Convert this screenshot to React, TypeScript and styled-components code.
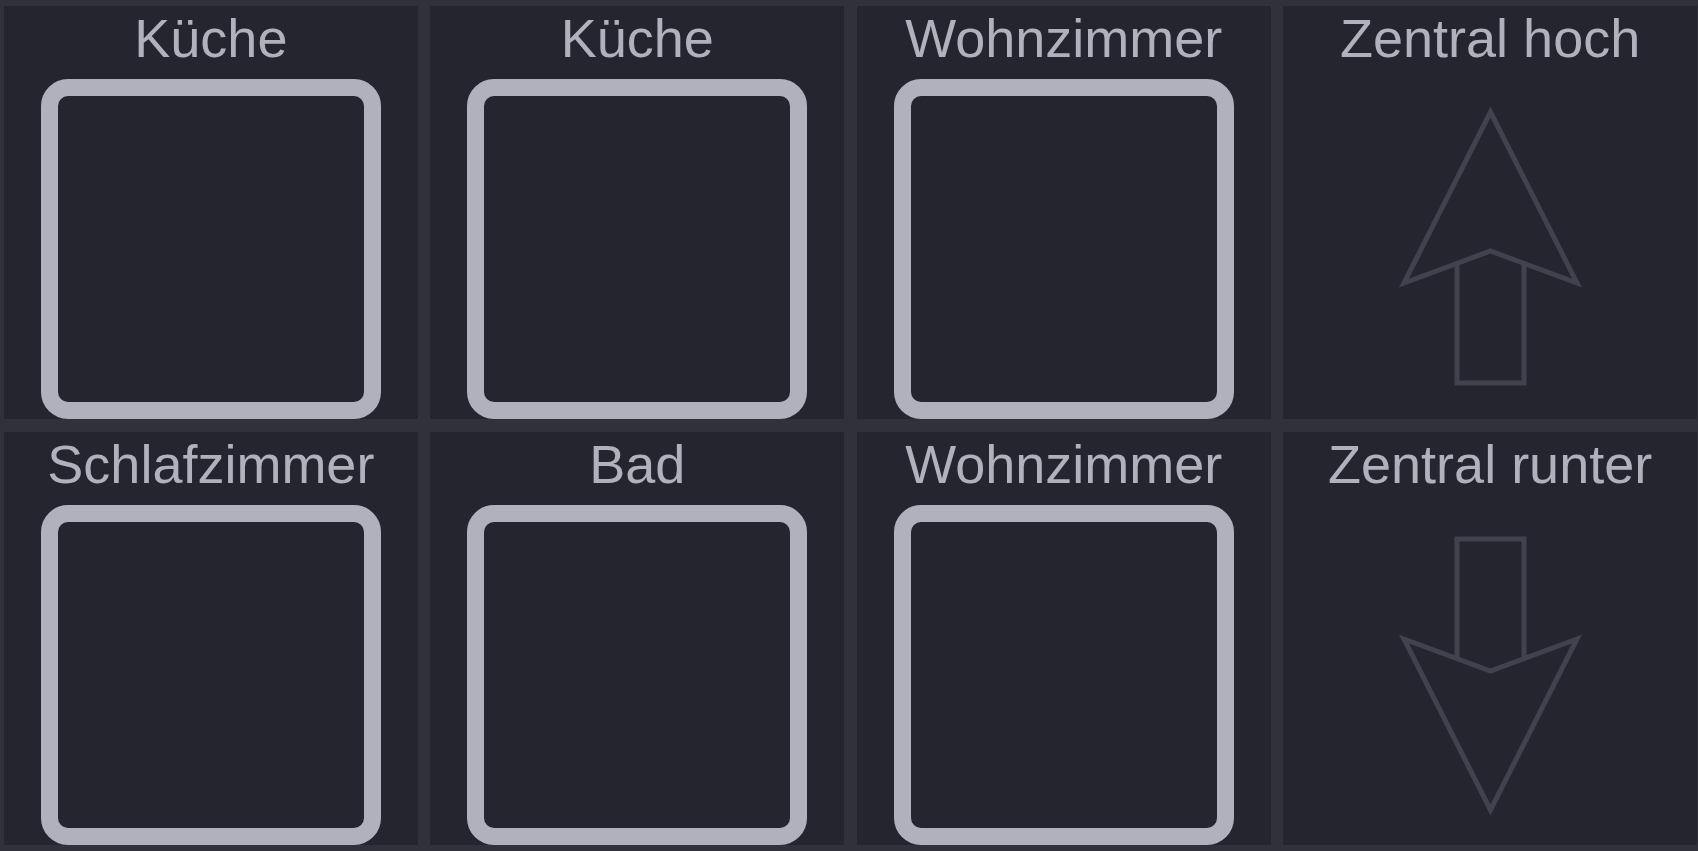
import React from 'react';
import styled, { createGlobalStyle } from 'styled-components';

const GlobalStyle = createGlobalStyle`
  html, body {
    margin: 0;
    padding: 0;
    background: #30313a;
  }
  body {
    font-family: 'Liberation Sans', Arial, sans-serif;
  }
`;

type Tile =
  | { kind: 'room'; label: string }
  | { kind: 'central'; label: string; dir: 'up' | 'down' };

const tiles: Tile[] = [
  { kind: 'room', label: 'Küche' },
  { kind: 'room', label: 'Küche' },
  { kind: 'room', label: 'Wohnzimmer' },
  { kind: 'central', label: 'Zentral hoch', dir: 'up' },
  { kind: 'room', label: 'Schlafzimmer' },
  { kind: 'room', label: 'Bad' },
  { kind: 'room', label: 'Wohnzimmer' },
  { kind: 'central', label: 'Zentral runter', dir: 'down' },
];

const Arrow: React.FC<{ dir: 'up' | 'down' }> = ({ dir }) => (
  <ArrowSvg viewBox="0 0 340 340" width={340} height={340}>
    <g
      transform={dir === 'down' ? 'rotate(180 170.5 169)' : undefined}
      fill="none"
      stroke="#42424e"
      strokeWidth={5}
    >
      <polygon points="170.5,33 257,204 170.5,172 84,204" />
      <polyline points="137,184.5 137,304 204,304 204,184.5" />
    </g>
  </ArrowSvg>
);

export default function App() {
  return (
    <>
      <GlobalStyle />
      <Board>
        {tiles.map((t, i) => (
          <Cell key={i}>
            <Title>{t.label}</Title>
            {t.kind === 'room' ? <Switch /> : <Arrow dir={t.dir} />}
          </Cell>
        ))}
      </Board>
    </>
  );
}

const Board = styled.div`
  display: grid;
  grid-template-columns: repeat(4, 1fr);
  grid-template-rows: 413px 413px;
  column-gap: 12.7px;
  row-gap: 13px;
  padding: 6px 1px 6px 4px;
  height: 851px;
  box-sizing: border-box;
  background: #30313a;
`;

const Cell = styled.div`
  display: flex;
  flex-direction: column;
  align-items: center;
  background: #24252e;
  padding-top: 1px;
  box-sizing: border-box;
  overflow: hidden;
`;

const Title = styled.div`
  font-size: 54px;
  line-height: 62px;
  height: 62px;
  color: #b1b1bd;
  white-space: nowrap;
  margin-bottom: 10px;
`;

const Switch = styled.div`
  width: 340px;
  height: 340px;
  box-sizing: border-box;
  border: 17px solid #b1b1bd;
  border-radius: 27px;
  background: #24252e;
  flex-shrink: 0;
`;

const ArrowSvg = styled.svg`
  display: block;
  flex-shrink: 0;
`;
